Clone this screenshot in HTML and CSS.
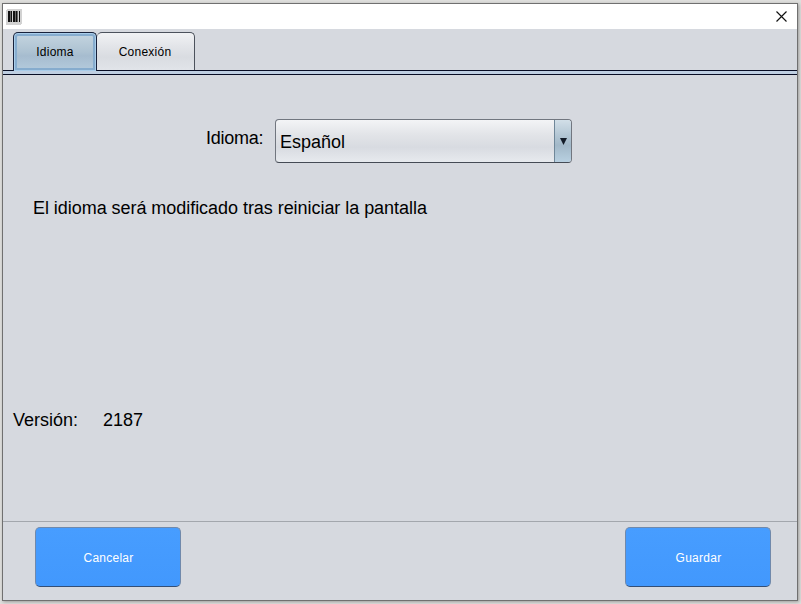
FILE: index.html
```html
<!DOCTYPE html>
<html lang="es">
<head>
<meta charset="utf-8">
<title>Idioma</title>
<link rel="stylesheet" href="styles.css">
</head>
<body>
<div class="window">
  <header class="titlebar">
    <svg class="app-icon" width="16" height="16" viewBox="0 0 16 16" shape-rendering="crispEdges">
      <rect width="16" height="16" rx="2" fill="#d2d2d2"/>
      <path fill="#111" d="M2 2h2v11H2zM5 2h1v11H5zM7 2h2v11H7zM10 2h1v11h-1zM13 2h1v11h-1z"/>
      <path fill="#666" d="M4 2h1v11H4zM9 2h1v11H9zM11 2h1v11h-1z"/>
    </svg>
    <svg class="close" width="11" height="11" viewBox="0 0 11 11"><path d="M.5.5l10 10M10.500.5l-10 10" stroke="#111" stroke-width="1.15" fill="none"/></svg>
  </header>
  <nav class="tabs">
    <div class="tab tab-active"><span>Idioma</span></div>
    <div class="tab tab-plain"><span>Conexión</span></div>
  </nav>
  <div class="tab-band"></div>
  <main class="content">
    <div class="language-row">
      <label>Idioma:</label>
      <div class="combo">
        <span class="combo-value">Español</span>
        <span class="combo-arrow"><svg width="7" height="7" viewBox="0 0 7 7"><path d="M0 0h7L3.500 7z" fill="#141c28"/></svg></span>
      </div>
    </div>
    <p class="notice">El idioma será modificado tras reiniciar la pantalla</p>
    <div class="version"><span>Versión:</span><span>2187</span></div>
  </main>
  <footer class="actions">
    <button>Cancelar</button>
    <button>Guardar</button>
  </footer>
</div>
</body>
</html>
```
FILE: styles.css
```css
* { box-sizing: border-box; }
body {
  margin: 0;
  padding: 3px 3px 3px 2px;
  height: 604px;
  overflow: hidden;
  background: #dededc;
  font-family: "Liberation Sans", Arial, sans-serif;
  color: #000;
}
.window {
  width: 796px;
  height: 598px;
  border: 1px solid #707070;
  background: #d6d9df;
  display: flex;
  flex-direction: column;
  box-shadow: 1px 1px 3px rgba(0, 0, 0, .3);
}
.titlebar {
  height: 25px;
  background: #fff;
  display: flex;
  justify-content: space-between;
  align-items: center;
  padding: 0 10px 0 3px;
}
.tabs {
  height: 41px;
  padding: 3px 0 0 10px;
  display: flex;
  position: relative;
  z-index: 1;
}
.tab {
  height: 38px;
  display: flex;
  justify-content: center;
  align-items: center;
  font-size: 12px;
  letter-spacing: .25px;
  border: 1px solid #2c3545;
  border-bottom: 0;
  border-radius: 5px 5px 0 0;
}
.tab-active {
  width: 84px;
  height: 39px;
  border-color: #18213a;
  background: linear-gradient(#c5d5e0, #adc2d2 50%, #a6bccf 60%, #b4cbdd);
  box-shadow: inset 0 0 0 1px #a9cdea, inset 0 0 0 3px #86acce;
}
.tab-active span { margin-top: -1px; }
.tab-plain {
  width: 98px;
  border-left: 0;
  border-color: #4c525c;
  background: linear-gradient(#f1f2f4, #e3e5e9 35%, #d9dce1 65%, #e1e4e9);
}
.tab-plain span { margin-left: -1px; }
.tab-band {
  height: 5px;
  border-top: 1px solid #080d24;
  border-bottom: 1px solid #080d24;
  background: #bfcfe2;
}
.content {
  height: 446px;
  padding: 44px 0 0 10px;
  font-size: 18px;
  line-height: 20px;
  display: flex;
  flex-direction: column;
}
.language-row {
  display: flex;
  padding-left: 193px;
}
.language-row label { width: 69px; padding-top: 9px; letter-spacing: -.25px; }
.combo {
  width: 297px;
  height: 44px;
  display: flex;
  border: 1px solid #71767f;
  border-bottom-color: #454b55;
  border-radius: 4px;
  overflow: hidden;
  background: linear-gradient(#f3f4f6, #e2e4e8 35%, #d8dbe1 65%, #e7eaee);
}
.combo-value { flex: 1; padding: 12px 0 0 4px; }
.combo-arrow {
  width: 17px;
  display: flex;
  align-items: center;
  justify-content: center;
  border-left: 1px solid #6f8799;
  background: linear-gradient(#d2dfe8, #b0c4d2 40%, #a2b8c8 60%, #b8d0e1);
}
.notice { margin: 35px 0 0 20px; letter-spacing: -.045px; }
.version { display: flex; gap: 25px; margin-top: 192px; }
.actions {
  flex: 1;
  border-top: 1px solid #a3a7ad;
  display: flex;
  justify-content: space-between;
  padding: 5px 26px 0 32px;
}
button {
  width: 146px;
  height: 60px;
  padding: 2px 0 0 1px;
  border: 1px solid #7089ab;
  border-bottom-color: #344f76;
  border-radius: 5px;
  background: linear-gradient(#479dff, #4298fd);
  color: #fff;
  font-family: inherit;
  font-size: 12px;
  letter-spacing: .25px;
}
```
